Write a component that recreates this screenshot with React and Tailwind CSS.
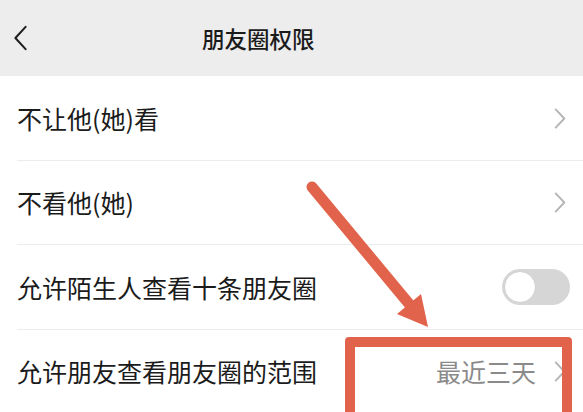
const font = { fontFamily: '"Noto Sans CJK SC", "Noto Sans", sans-serif' }

function ChevronRight({ className = '' }) {
  return (
    <svg viewBox="0 0 12 22" className={`h-[21px] w-[12px] ${className}`} fill="none">
      <path d="M1.5 1.5 L10.5 11 L1.5 20.5" stroke="#b5b5b5" strokeWidth="2" strokeLinecap="round" strokeLinejoin="round" />
    </svg>
  )
}

function Row({ label, height, last, children }) {
  return (
    <div className="pl-[17px]">
      <div
        className={`flex items-center justify-between ${last ? '' : 'border-b border-[#ececec]'}`}
        style={{ height }}
      >
        <span className="text-[25px] leading-none text-[#1b1b1b]">{label}</span>
        {children}
      </div>
    </div>
  )
}

export default function App() {
  return (
    <div className="relative h-[412px] w-[583px] overflow-hidden bg-white" style={font}>
      <header className="flex h-[76px] items-center bg-[#ededed] pl-[13px]">
        <svg viewBox="0 0 16 28" className="h-[26px] w-[15px]" fill="none">
          <path d="M13.5 2 L2.5 14 L13.5 26" stroke="#1f1f1f" strokeWidth="2.2" strokeLinecap="round" strokeLinejoin="round" />
        </svg>
        <h1 className="ml-[174px] text-[22.5px] font-medium leading-none text-[#1b1b1b]">朋友圈权限</h1>
      </header>

      <Row label="不让他(她)看" height={85}>
        <ChevronRight className="mr-[17px]" />
      </Row>
      <Row label="不看他(她)" height={84}>
        <ChevronRight className="mr-[17px]" />
      </Row>
      <Row label="允许陌生人查看十条朋友圈" height={85}>
        <div className="mr-[13px] flex h-[36px] w-[68px] items-center rounded-full bg-[#d6d6d6] px-[2px]">
          <div className="h-[32px] w-[32px] rounded-full border border-[#cfcfcf] bg-white" />
        </div>
      </Row>
      <Row label="允许朋友查看朋友圈的范围" height={82} last>
        <div className="mr-[17px] flex items-center gap-[18px]">
          <span className="text-[25px] leading-none text-[#8a8a8a]">最近三天</span>
          <ChevronRight />
        </div>
      </Row>

      {/* annotation overlay */}
      <div className="pointer-events-none absolute left-[345px] top-[337px] h-[90px] w-[227px] rounded-[4px] border-[10px] border-[#e2634b]" />
      <svg className="pointer-events-none absolute inset-0" width="583" height="412" viewBox="0 0 583 412">
        <line x1="312" y1="187" x2="410" y2="305" stroke="#e2634b" strokeWidth="11" strokeLinecap="round" />
        <polygon points="397,314 421,294 428,327" fill="#e2634b" />
      </svg>
    </div>
  )
}
